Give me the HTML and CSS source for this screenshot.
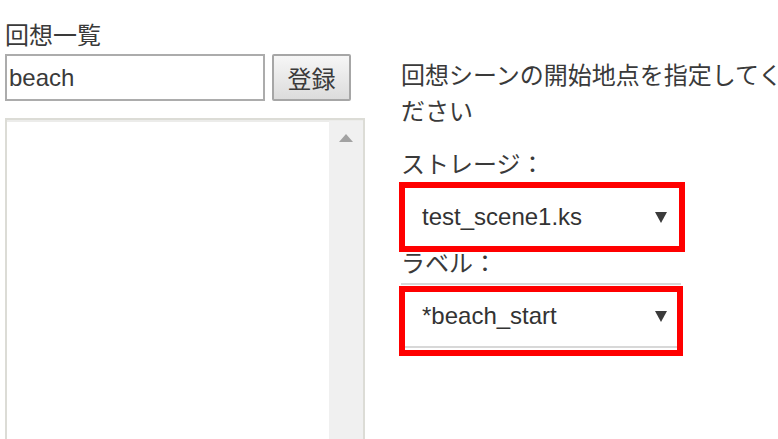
FILE: index.html
```html
<!DOCTYPE html>
<html lang="ja">
<head>
<meta charset="utf-8">
<title>回想一覧</title>
<link rel="stylesheet" href="styles.css">
</head>
<body>
<div class="page">
  <section class="left">
    <h2 class="title">回想一覧</h2>
    <div class="addrow">
      <input class="name" type="text" value="beach">
      <button class="btn" type="button">登録</button>
    </div>
    <div class="list">
      <div class="list-body"></div>
      <div class="scroll">
        <svg class="up" width="14" height="8" viewBox="0 0 14 8"><polygon points="7,0 14,8 0,8" fill="#a2a2a2"/></svg>
      </div>
    </div>
  </section>
  <section class="right">
    <p class="desc">回想シーンの開始地点を指定してください</p>
    <div class="label l1">ストレージ：</div>
    <div class="hl">
      <div class="sel s1">
        <span>test_scene1.ks</span>
        <svg class="arr" width="12" height="12" viewBox="0 0 12 12"><polygon points="0,1 12,1 6,12" fill="#3b3b3b"/></svg>
      </div>
    </div>
    <div class="label l2">ラベル：</div>
    <div class="under"></div>
    <div class="hl hl2">
      <div class="sel s2">
        <span>*beach_start</span>
        <svg class="arr" width="12" height="12" viewBox="0 0 12 12"><polygon points="0,1 12,1 6,12" fill="#3b3b3b"/></svg>
      </div>
    </div>
  </section>
</div>
</body>
</html>
```
FILE: styles.css
```css
html, body {
  margin: 0;
  padding: 0;
  background: #ffffff;
  overflow: hidden;
}
body {
  font-family: "Liberation Sans", "Noto Sans CJK JP", sans-serif;
  font-size: 24px;
  color: #3a3a3a;
}
.page {
  display: flex;
  padding-left: 5px;
  gap: 36px;
}
.left {
  width: 360px;
  flex: none;
}
.title {
  margin: 18px 0 0;
  font-size: 24px;
  font-weight: normal;
  line-height: 36px;
  height: 36px;
  color: #3a3a3a;
}
.addrow {
  display: flex;
  gap: 7px;
  height: 47px;
}
.name {
  box-sizing: border-box;
  width: 260px;
  height: 47px;
  margin: 0;
  border: 2px solid #acacac;
  padding: 0 2px;
  font-family: "Liberation Sans", "Noto Sans CJK JP", sans-serif;
  font-size: 24px;
  color: #3a3a3a;
  outline: none;
}
.btn {
  box-sizing: border-box;
  width: 79px;
  height: 47px;
  margin: 0;
  border: 2px solid #a6a6a6;
  border-radius: 2px;
  background: linear-gradient(#f6f6f6, #dcdcdc);
  font-family: "Liberation Sans", "Noto Sans CJK JP", sans-serif;
  font-size: 24px;
  color: #3a3a3a;
  padding: 0;
}
.list {
  box-sizing: border-box;
  margin-top: 17px;
  width: 360px;
  height: 400px;
  border: 2px solid #dcdcd6;
  display: flex;
  box-shadow: inset 0 2px 0 #ececea;
}
.list-body {
  flex: 1;
}
.scroll {
  width: 34px;
  margin-top: 1px;
  background: #f0f0f0;
  display: flex;
  justify-content: center;
  padding-top: 13px;
  box-sizing: border-box;
}
.up {
  display: block;
}
.right {
  width: 390px;
  flex: none;
}
.desc {
  margin: 58px 0 0;
  line-height: 36px;
  color: #3a3a3a;
}
.label {
  color: #3a3a3a;
}
.l1 {
  margin-top: 18px;
  line-height: 34px;
  height: 34px;
}
.l2 {
  line-height: 24px;
  height: 24px;
  padding-bottom: 7px;
}
.hl {
  box-sizing: border-box;
  margin-left: -2px;
  width: 286px;
  height: 70px;
  border: 6px solid #ff0000;
}
.under {
  width: 280px;
  border-top: 2px solid #d8d8d8;
}
.hl2 {
  width: 284px;
  margin-top: 1px;
}
.sel {
  display: flex;
  align-items: center;
  justify-content: space-between;
  padding-left: 17px;
  color: #333333;
}
.s1 {
  height: 58px;
  padding-right: 12px;
}
.s2 {
  height: 48px;
  padding-right: 10px;
  padding-bottom: 6px;
  border-bottom: 2px solid #d8d8d8;
  align-items: flex-start;
  line-height: 48px;
}
.s2 .arr {
  margin-top: 18px;
}
.arr {
  display: block;
  flex: none;
}
```
